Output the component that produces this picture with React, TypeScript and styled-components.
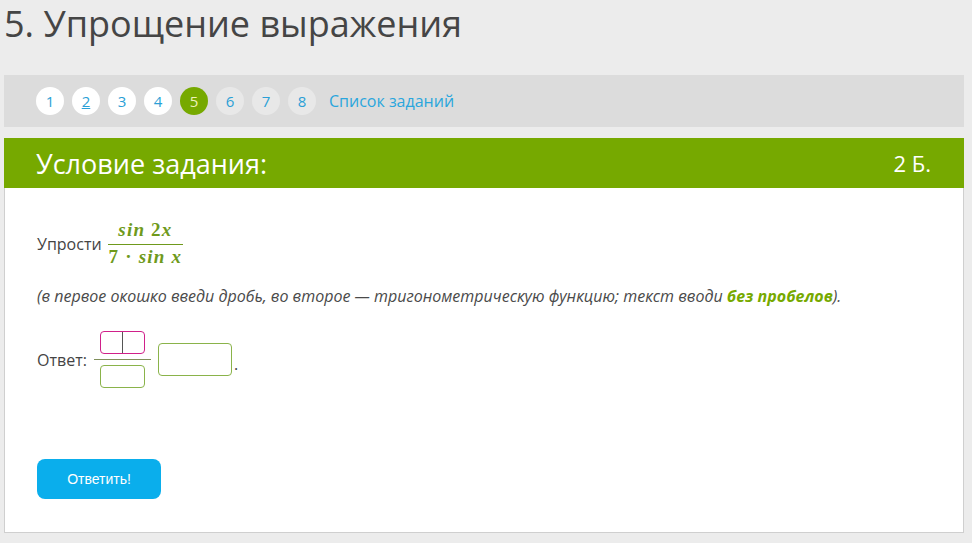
import React from "react";
import styled, { createGlobalStyle } from "styled-components";

const Global = createGlobalStyle`
  html, body { margin: 0; padding: 0; background: #ececec; }
  body { font-family: "Open Sans", "Noto Sans", sans-serif; color: #444; }
`;

const Page = styled.div`
  width: 960px;
  padding-left: 4px;
`;

const Title = styled.h1`
  margin: 0 0 27px 0;
  font-size: 36px;
  line-height: 48px;
  font-weight: 400;
  color: #454545;
  white-space: nowrap;
`;

const Nav = styled.nav`
  height: 52px;
  background: #dcdcdc;
  display: flex;
  align-items: center;
  padding-left: 32px;
  gap: 8px;
`;

const Bubble = styled.a<{ $state: "done" | "current" | "todo"; $underline?: boolean }>`
  width: 28px;
  height: 28px;
  border-radius: 50%;
  display: flex;
  align-items: center;
  justify-content: center;
  font-size: 15px;
  text-decoration: ${(p) => (p.$underline ? "underline" : "none")};
  background: ${(p) => (p.$state === "done" ? "#ffffff" : p.$state === "current" ? "#76a900" : "#e8e8e8")};
  color: ${(p) => (p.$state === "current" ? "#eef2b8" : "#2a9fd6")};
`;

const ListLink = styled.a`
  margin-left: 5px;
  font-size: 16px;
  color: #2aa6dd;
  text-decoration: none;
`;

const Panel = styled.section`
  margin-top: 11px;
  width: 958px;
  background: #fff;
  border: 1px solid #cfcfcf;
  border-top: none;
`;

const PanelHeader = styled.header`
  height: 50px;
  margin: 0 -1px;
  background: #76a900;
  color: #fff;
  display: flex;
  align-items: center;
  justify-content: space-between;
  padding: 0 33px 0 32px;
  font-size: 27px;
`;

const Points = styled.span`
  font-size: 22px;
`;

const PanelBody = styled.div`
  padding: 33px 32px 33px 32px;
  font-size: 16px;
  color: #444;
`;

const ProblemRow = styled.div`
  display: flex;
  align-items: center;
  gap: 6px;
`;

const MathFrac = styled.span`
  display: inline-flex;
  flex-direction: column;
  align-items: center;
  font-family: "Liberation Serif", "DejaVu Serif", serif;
  font-weight: 700;
  font-size: 19px;
  color: #6f9a1c;
  line-height: 21px;
  margin-top: -2px;
`;

const MathNum = styled.span`
  padding: 0 6px 4px;
  letter-spacing: 1.2px;
`;

const MathDen = styled.span`
  border-top: 1px solid #6f9a1c;
  padding: 1px 1px 0;
  letter-spacing: 1.2px;
`;

const I = styled.i``;

const Hint = styled.p`
  margin: 18px 0 0 0;
  font-style: italic;
  line-height: 22px;
  color: #4a4a4a;
`;

const Strong = styled.b`
  color: #76a900;
`;

const AnswerRow = styled.div`
  margin-top: 24px;
  display: flex;
  align-items: center;
  gap: 7px;
`;

const AnsFrac = styled.div`
  display: flex;
  flex-direction: column;
  align-items: center;
  gap: 5px;
`;

const FracLine = styled.div`
  width: 57px;
  height: 1px;
  background: #7f8f5a;
`;

const Box = styled.div<{ $w: number; $h: number; $c: string }>`
  box-sizing: border-box;
  width: ${(p) => p.$w}px;
  height: ${(p) => p.$h}px;
  border: 1px solid ${(p) => p.$c};
  border-radius: 4px;
  background: #fff;
  display: flex;
  justify-content: center;
`;

const Divider = styled.span`
  width: 1px;
  height: 100%;
  background: #555;
`;

const Dot = styled.span`
  margin-left: -5px;
  margin-top: 8px;
`;

const SubmitButton = styled.button`
  margin-top: 71px;
  width: 124px;
  height: 40px;
  border: none;
  border-radius: 8px;
  background: #0aaeec;
  color: #fff;
  font-family: "Liberation Sans", Arial, sans-serif;
  font-size: 14px;
  cursor: pointer;
`;

export default function App() {
  const states: ("done" | "current" | "todo")[] = ["done", "done", "done", "done", "current", "todo", "todo", "todo"];
  return (
    <>
      <Global />
      <Page>
        <Title>5. Упрощение выражения</Title>
        <Nav>
          {states.map((s, i) => (
            <Bubble key={i} $state={s} $underline={i === 1}>
              {i + 1}
            </Bubble>
          ))}
          <ListLink>Список заданий</ListLink>
        </Nav>
        <Panel>
          <PanelHeader>
            <span>Условие задания:</span>
            <Points>2 Б.</Points>
          </PanelHeader>
          <PanelBody>
            <ProblemRow>
              <span>Упрости</span>
              <MathFrac>
                <MathNum>
                  <I>sin</I> 2<I>x</I>
                </MathNum>
                <MathDen>
                  7 · <I>sin</I> <I>x</I>
                </MathDen>
              </MathFrac>
            </ProblemRow>
            <Hint>
              (в первое окошко введи дробь, во второе — тригонометрическую функцию; текст вводи{" "}
              <Strong>без пробелов</Strong>).
            </Hint>
            <AnswerRow>
              <span>Ответ:</span>
              <AnsFrac>
                <Box $w={45} $h={23} $c="#d0208a">
                  <Divider />
                </Box>
                <FracLine />
                <Box $w={45} $h={23} $c="#8ab34a" />
              </AnsFrac>
              <Box $w={74} $h={33} $c="#8ab34a" />
              <Dot>.</Dot>
            </AnswerRow>
            <SubmitButton>Ответить!</SubmitButton>
          </PanelBody>
        </Panel>
      </Page>
    </>
  );
}
